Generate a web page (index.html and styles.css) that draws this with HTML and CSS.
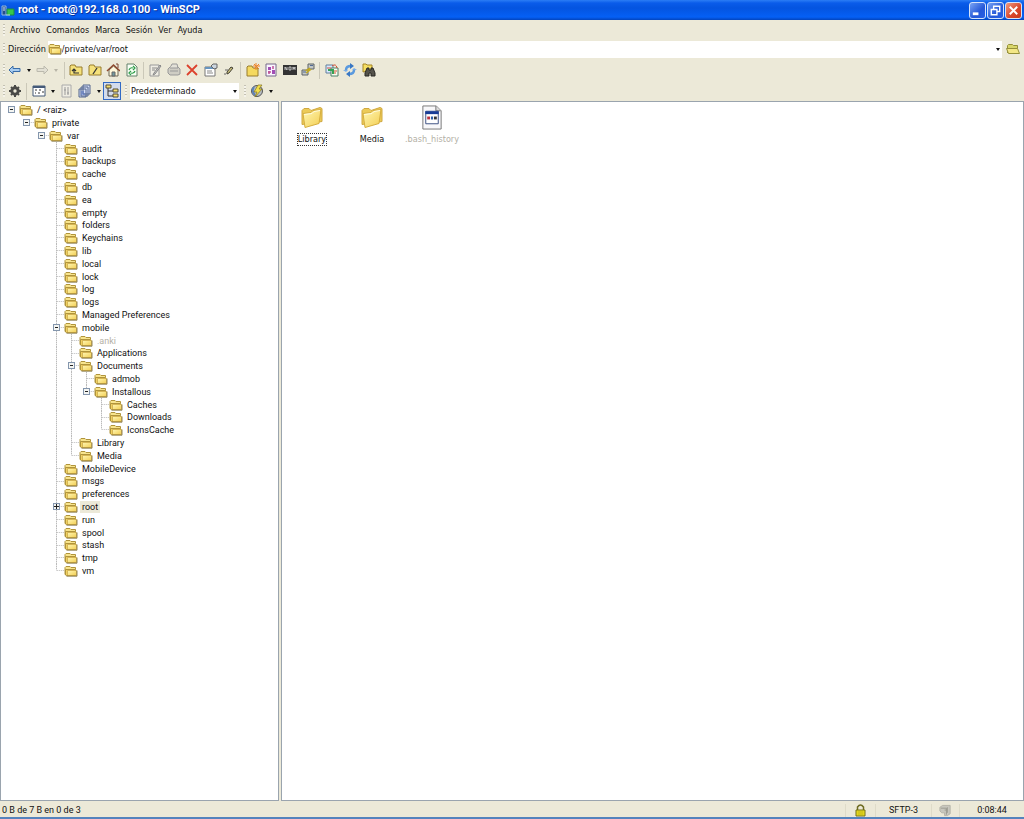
FILE: index.html
```html
<!DOCTYPE html>
<html lang="es">
<head>
<meta charset="utf-8">
<title>root - root@192.168.0.100 - WinSCP</title>
<link rel="stylesheet" href="styles.css">
</head>
<body>
<svg class="defs" aria-hidden="true">
  <defs>
    <linearGradient id="gold" x1="0" y1="0" x2="1" y2="1"><stop offset="0" stop-color="#fff7b4"/><stop offset="1" stop-color="#f3ce52"/></linearGradient>
    <symbol id="folder" viewBox="0 0 14 12"><path d="M1 9.500V2.500L2 1.500h4l1 1h4.500v2" fill="#f8e48c" stroke="#b0943c"/><path d="M1.500 10V4.500h10v6h-9z" fill="#f0d060" stroke="#b0943c"/><path d="M3.500 5.500h9v5h-9z" fill="url(#gold)" stroke="#c9a545" stroke-width=".7"/><path d="M2.500 11.200h10.500V5.500" fill="none" stroke="#77662f" stroke-width=".8"/></symbol>
    <symbol id="bigfolder" viewBox="0 0 24 24"><path d="M2 19V5l2-2h5l2 2 9-3 2 1v13z" fill="#eccb58" stroke="#d0a840"/><path d="M3 8l8-1 2-2 8-1-2 14-14 4z" fill="url(#gold)" stroke="#d6ae3e"/><path d="M4 9l8-1 2-2 6-1" fill="none" stroke="#fffce0"/></symbol>
    <symbol id="yfolder" viewBox="0 0 14 14"><path d="M1 12V3l1-1h4l1 2h6v8z" fill="#f5e17b" stroke="#987d2e"/></symbol>
  </defs>
</svg>
<div class="window">
  <header class="titlebar">
    <svg class="appicon" viewBox="0 0 14 14"><path d="M1 3h4v9H1z" fill="#244e8d" stroke="#92b7dd"/><path d="M2 5h2M2 7h2" stroke="#d6e8ff"/><path d="M6 6h7v6H6z" fill="#35c94b" stroke="#188c42"/><path d="M5 12h4" stroke="#c8e8ed"/></svg>
    <h1>root - root@192.168.0.100 - WinSCP</h1>
    <button class="cap" aria-label="Minimizar"><svg viewBox="0 0 16 16"><path d="M3 11.500h6" stroke="#fff" stroke-width="3"/></svg></button>
    <button class="cap" aria-label="Restaurar"><svg viewBox="0 0 16 16"><path d="M6 6V3.500h6.500V9H10M3.500 7h6v5.500h-6z" fill="none" stroke="#fff" stroke-width="1.500"/></svg></button>
    <button class="cap close" aria-label="Cerrar"><svg viewBox="0 0 16 16"><path d="M4 4l8 8M12 4l-8 8" stroke="#fff" stroke-width="2"/></svg></button>
  </header>
  <nav class="menu"><i class="grip"></i>
    <button>Archivo</button><button>Comandos</button><button>Marca</button><button>Sesión</button><button>Ver</button><button>Ayuda</button>
  </nav>
  <div class="address"><i class="grip"></i>
    <label for="dir">Dirección</label>
    <div class="field"><svg class="folder"><use href="#folder"/></svg><input id="dir" value="/private/var/root"><button class="drop" aria-label="Historial"></button></div>
    <button class="open" aria-label="Abrir carpeta"><svg class="folder" viewBox="0 0 14 12"><path d="M1.500 10V2.500l1-1h4l1 1h4v3" fill="#d8d66b" stroke="#96903a"/><path d="M2.500 10.500l-2-5h11l2 5z" fill="#f3e786" stroke="#96903a"/></svg></button>
  </div>
  <div class="bar" role="toolbar" aria-label="Navegación"><i class="grip"></i>
    <button class="tb" aria-label="Atrás"><svg viewBox="0 0 14 14"><path d="M1 7l4-4v2.500h7v3H5V11z" fill="#a8ccf0" stroke="#396ca8"/></svg></button><button class="drop" aria-label="Lista atrás"></button>
    <button class="tb" aria-label="Adelante" disabled><svg viewBox="0 0 14 14"><path d="M13 7L9 3v2.500H2v3h7V11z" fill="#e2e0d4" stroke="#bbb9ad"/></svg></button><button class="drop off" aria-label="Lista adelante" disabled></button><i class="sep"></i>
    <button class="tb" aria-label="Subir"><svg viewBox="0 0 14 14"><use href="#yfolder"/><path d="M10 10H5V6M3 8l2-2 2 2" fill="none" stroke="#333" stroke-width="1.200"/></svg></button>
    <button class="tb" aria-label="Raíz"><svg viewBox="0 0 14 14"><use href="#yfolder"/><path d="M5 11l4-6" stroke="#333" stroke-width="1.300"/></svg></button>
    <button class="tb" aria-label="Inicio"><svg viewBox="0 0 14 14"><path d="M3 7v6h9V7L7.500 3z" fill="#fff7d9" stroke="#6c6757"/><path d="M1 8l6.500-6L14 8" fill="none" stroke="#8e4b30" stroke-width="1.500"/><path d="M10 1h2v4" fill="none" stroke="#7b4431"/><path d="M6 9h3v4H6z" fill="#729ba0" stroke="#666"/></svg></button>
    <button class="tb" aria-label="Actualizar"><svg viewBox="0 0 14 14"><path d="M2 1h7l3 3v9H2z" fill="#f7fff4" stroke="#65806a"/><path d="M4 7q1-3 4-2M8 3l2 2-2 2M10 8q-1 3-4 2M6 8l-2 2 2 2" fill="none" stroke="#2c9c48" stroke-width="1.200"/></svg></button><i class="sep"></i>
    <button class="tb" aria-label="Editar" disabled><svg viewBox="0 0 14 14"><path d="M2 2h9v11H2z" fill="#efede4" stroke="#999"/><path d="M4 5h5M4 7h3M6 10l6-8 1 1-6 8-2 1z" fill="#ccc" stroke="#888"/></svg></button>
    <button class="tb" aria-label="Abrir" disabled><svg viewBox="0 0 14 14"><path d="M1 6l3-3h6l3 3v5l-2 1H3l-2-2z" fill="#cfcdc4" stroke="#999"/><path d="M4 3l1-2h5l1 4H3M3 8h8" fill="#e3e1d8" stroke="#999"/></svg></button>
    <button class="tb" aria-label="Borrar"><svg viewBox="0 0 14 14"><path d="M2 2l10 10M12 2L2 12" stroke="#dc422d" stroke-width="1.800"/></svg></button>
    <button class="tb" aria-label="Propiedades"><svg viewBox="0 0 14 14"><path d="M1 4h10v9H1z" fill="#fff" stroke="#777"/><path d="M1 5h10" stroke="#6795bf" stroke-width="2"/><path d="M3 8h5M3 10h6" stroke="#888"/><path d="M7 3l2-2h4v4l-3 1z" fill="#ccd6df" stroke="#666"/></svg></button>
    <button class="tb" aria-label="Renombrar"><svg viewBox="0 0 14 14"><path d="M5 9l4-5 2 1-4 5-2 1z" fill="#c9bf7b" stroke="#413f35"/><path d="M3 7h3M3 10v2" stroke="#666"/></svg></button><i class="sep"></i>
    <button class="tb" aria-label="Nueva carpeta"><svg viewBox="0 0 14 14"><path d="M1 13V4l1-1h4l1 2h5v8z" fill="#f5d95f" stroke="#987d2e"/><path d="M10 0v7M7 3h7M8 1l5 5M13 1L8 6" stroke="#ed8228"/></svg></button>
    <button class="tb" aria-label="Sincronizar navegación"><svg viewBox="0 0 14 14"><path d="M2 1h10v12H2z" fill="#faf4ff" stroke="#746988"/><path d="M4 4h3v3H4zM8 7h3v4H8z" fill="#a24db5"/><path d="M4 9h3M9 3v3M5 8v3" stroke="#bd4f95" stroke-width="1.500"/></svg></button>
    <button class="tb" aria-label="Consola"><svg viewBox="0 0 14 14"><path d="M0 2h14v10H0z" fill="#333"/><path d="M2 7V4l2 3V4M6 4h2v3H6zM10 7V4l1 2 1-2v3" fill="none" stroke="#e0e0e0" stroke-width=".8"/></svg></button>
    <button class="tb" aria-label="PuTTY"><svg viewBox="0 0 14 14"><path d="M7 1h6v5H7zM1 7h6v5H1z" fill="#c4c8c7" stroke="#5e6567"/><path d="M9 5L6 7h3l-4 3" fill="none" stroke="#c3aa1f" stroke-width="1.500"/><path d="M9 2.500h3M2 9h3" stroke="#526b95"/></svg></button><i class="sep"></i>
    <button class="tb" aria-label="Sincronizar"><svg viewBox="0 0 14 14"><path d="M1 2h7v8H1z" fill="#d7eaff" stroke="#627e9d"/><path d="M6 5h7v8H6z" fill="#f5fff3" stroke="#4e7f68"/><path d="M7 3q4-3 5 2M2 5h4M7 8h5M7 10h4" fill="none" stroke="#d35134"/><path d="M3 7h5v4" fill="none" stroke="#35a254" stroke-width="2"/></svg></button>
    <button class="tb" aria-label="Mantener actualizado"><svg viewBox="0 0 14 14"><path d="M3 7q0-4 5-4M11 7q0 4-5 4" fill="none" stroke="#5b9ade" stroke-width="2.500"/><path d="M7 0l4 3-4 3zM7 8l-4 3 4 3z" fill="#3a78c4"/><path d="M0 7h5L3 9zM9 7h5l-3-2z" fill="#79ade8"/></svg></button>
    <button class="tb" aria-label="Buscar"><svg viewBox="0 0 14 14"><path d="M1 9V1h3l1 1h5v5z" fill="#f5df64" stroke="#a68625"/><path d="M5 5h2v2h2V5h2l2 5v3H9v-3H7v3H3v-3z" fill="#55534b" stroke="#292925"/></svg></button>
  </div>
  <div class="bar" role="toolbar" aria-label="Opciones"><i class="grip"></i>
    <button class="tb" aria-label="Preferencias"><svg viewBox="0 0 14 14"><circle cx="7" cy="7" r="3.200" fill="none" stroke="#494946" stroke-width="3"/><path d="M7 1v2M7 11v2M1 7h2M11 7h2M3 3l1 1M10 10l1 1M11 3l-1 1M4 10l-1 1" stroke="#494946" stroke-width="2"/></svg></button><i class="sep"></i>
    <button class="tb" aria-label="Vista"><svg viewBox="0 0 14 14"><path d="M1 2h12v10H1z" fill="#fff" stroke="#445a79"/><path d="M1 3h12" stroke="#445a79" stroke-width="2"/><path d="M3 6h2M7 6h2M3 9h1M6 9h2M10 8h2" stroke="#333"/></svg></button><button class="drop" aria-label="Estilo de vista"></button>
    <button class="tb" aria-label="Columnas" disabled><svg viewBox="0 0 14 14"><path d="M2 1h9v12H2z" fill="#efede3" stroke="#aaa"/><path d="M5 3v8M8 3v8M4 6h2M7 9h2" stroke="#999"/></svg></button>
    <button class="tb" aria-label="Cola"><svg viewBox="0 0 14 14"><path d="M5 1h7v9H5zM3 3h7v9H3zM1 5h7v8H1z" fill="#d5def7" stroke="#52648b"/><path d="M3 8h3M3 10h4" stroke="#5472c1"/></svg></button><button class="drop" aria-label="Opciones de cola"></button>
    <button class="tb on" aria-label="Árbol" aria-pressed="true"><svg viewBox="0 0 14 14"><path d="M3 4v8h5M3 7h5" fill="none" stroke="#333"/><path d="M1 1h5v3H1zM8 5h5v3H8zM8 10h5v3H8z" fill="#f4df70" stroke="#544d35"/></svg></button>
    <i class="grip first"></i>
    <div class="preset"><select aria-label="Transferencia"><option>Predeterminado</option></select><i class="drop"></i></div>
    <i class="grip second"></i>
    <button class="tb" aria-label="Ajustes de transferencia"><svg viewBox="0 0 14 14"><circle cx="7" cy="7" r="5.500" fill="#b7bdc2" stroke="#555"/><path d="M4 3q-3 4 1 8" fill="none" stroke="#5c81b8" stroke-width="2"/><path d="M8 1L4 8h3l-2 5 7-8H9l3-4z" fill="#f3df49" stroke="#81731f" stroke-width=".7"/></svg></button><button class="drop" aria-label="Más ajustes"></button>
  </div>
  <main class="panels">
    <ul class="tree" role="tree" aria-label="Carpetas remotas">
      <li><i><button class="tg" aria-label="Contraer"></button></i><svg class="folder"><use href="#folder"/></svg><span>/ &lt;raiz&gt;</span></li>
      <li><i></i><i class="h"><button class="tg" aria-label="Contraer"></button></i><svg class="folder"><use href="#folder"/></svg><span>private</span></li>
      <li><i></i><i></i><i class="h"><button class="tg" aria-label="Contraer"></button></i><svg class="folder"><use href="#folder"/></svg><span>var</span></li>
      <li class="d3"><i class="v h"></i><svg class="folder"><use href="#folder"/></svg><span>audit</span></li>
      <li class="d3"><i class="v h"></i><svg class="folder"><use href="#folder"/></svg><span>backups</span></li>
      <li class="d3"><i class="v h"></i><svg class="folder"><use href="#folder"/></svg><span>cache</span></li>
      <li class="d3"><i class="v h"></i><svg class="folder"><use href="#folder"/></svg><span>db</span></li>
      <li class="d3"><i class="v h"></i><svg class="folder"><use href="#folder"/></svg><span>ea</span></li>
      <li class="d3"><i class="v h"></i><svg class="folder"><use href="#folder"/></svg><span>empty</span></li>
      <li class="d3"><i class="v h"></i><svg class="folder"><use href="#folder"/></svg><span>folders</span></li>
      <li class="d3"><i class="v h"></i><svg class="folder"><use href="#folder"/></svg><span>Keychains</span></li>
      <li class="d3"><i class="v h"></i><svg class="folder"><use href="#folder"/></svg><span>lib</span></li>
      <li class="d3"><i class="v h"></i><svg class="folder"><use href="#folder"/></svg><span>local</span></li>
      <li class="d3"><i class="v h"></i><svg class="folder"><use href="#folder"/></svg><span>lock</span></li>
      <li class="d3"><i class="v h"></i><svg class="folder"><use href="#folder"/></svg><span>log</span></li>
      <li class="d3"><i class="v h"></i><svg class="folder"><use href="#folder"/></svg><span>logs</span></li>
      <li class="d3"><i class="v h"></i><svg class="folder"><use href="#folder"/></svg><span>Managed Preferences</span></li>
      <li class="d3"><i class="v h"><button class="tg" aria-label="Contraer"></button></i><svg class="folder"><use href="#folder"/></svg><span>mobile</span></li>
      <li class="d3"><i class="v"></i><i class="v h"></i><svg class="folder"><use href="#folder"/></svg><span class="dim">.anki</span></li>
      <li class="d3"><i class="v"></i><i class="v h"></i><svg class="folder"><use href="#folder"/></svg><span>Applications</span></li>
      <li class="d3"><i class="v"></i><i class="v h"><button class="tg" aria-label="Contraer"></button></i><svg class="folder"><use href="#folder"/></svg><span>Documents</span></li>
      <li class="d3"><i class="v"></i><i class="v"></i><i class="v h"></i><svg class="folder"><use href="#folder"/></svg><span>admob</span></li>
      <li class="d3"><i class="v"></i><i class="v"></i><i class="v end h"><button class="tg" aria-label="Contraer"></button></i><svg class="folder"><use href="#folder"/></svg><span>Installous</span></li>
      <li class="d3"><i class="v"></i><i class="v"></i><i></i><i class="v h"></i><svg class="folder"><use href="#folder"/></svg><span>Caches</span></li>
      <li class="d3"><i class="v"></i><i class="v"></i><i></i><i class="v h"></i><svg class="folder"><use href="#folder"/></svg><span>Downloads</span></li>
      <li class="d3"><i class="v"></i><i class="v"></i><i></i><i class="v end h"></i><svg class="folder"><use href="#folder"/></svg><span>IconsCache</span></li>
      <li class="d3"><i class="v"></i><i class="v h"></i><svg class="folder"><use href="#folder"/></svg><span>Library</span></li>
      <li class="d3"><i class="v"></i><i class="v end h"></i><svg class="folder"><use href="#folder"/></svg><span>Media</span></li>
      <li class="d3"><i class="v h"></i><svg class="folder"><use href="#folder"/></svg><span>MobileDevice</span></li>
      <li class="d3"><i class="v h"></i><svg class="folder"><use href="#folder"/></svg><span>msgs</span></li>
      <li class="d3"><i class="v h"></i><svg class="folder"><use href="#folder"/></svg><span>preferences</span></li>
      <li class="d3"><i class="v h"><button class="tg plus" aria-label="Expandir"></button></i><svg class="folder"><use href="#folder"/></svg><span class="sel">root</span></li>
      <li class="d3"><i class="v h"></i><svg class="folder"><use href="#folder"/></svg><span>run</span></li>
      <li class="d3"><i class="v h"></i><svg class="folder"><use href="#folder"/></svg><span>spool</span></li>
      <li class="d3"><i class="v h"></i><svg class="folder"><use href="#folder"/></svg><span>stash</span></li>
      <li class="d3"><i class="v h"></i><svg class="folder"><use href="#folder"/></svg><span>tmp</span></li>
      <li class="d3"><i class="v end h"></i><svg class="folder"><use href="#folder"/></svg><span>vm</span></li>
    </ul>
    <ul class="files" aria-label="Archivos">
      <li><svg class="big"><use href="#bigfolder"/></svg><span class="focus">Library</span></li>
      <li><svg class="big"><use href="#bigfolder"/></svg><span>Media</span></li>
      <li><svg class="big" viewBox="0 0 24 26"><path d="M2.500 1h14l5 5v19h-19z" fill="#f8f8fa" stroke="#777"/><path d="M16 1v5h5" fill="#ddd" stroke="#777"/><path d="M5.500 6.500h13v13h-13z" fill="#fff" stroke="#3b4f82"/><path d="M5 8h14" stroke="#183c96" stroke-width="3"/><path d="M7 12h3v3H7z" fill="#bd3340"/><path d="M11 12h2v3h-2z" fill="#245aa5"/><path d="M14 12h3v3h-3z" fill="#333"/></svg><span class="dim">.bash_history</span></li>
    </ul>
  </main>
  <footer class="status">
    <span class="count">0 B de 7 B en 0 de 3</span>
    <span class="cell lock"><svg viewBox="0 0 12 13"><path d="M3 6V3q3-4 6 0v3" fill="none" stroke="#6d6b22" stroke-width="1.500"/><path d="M1.500 6h9v6h-9z" fill="#f1e51d" stroke="#736e16"/><path d="M3 8h6M3 10h6" stroke="#b8a918"/></svg></span>
    <span class="cell proto">SFTP-3</span>
    <span class="cell comp"><svg viewBox="0 0 14 13"><path d="M1 3l3-2h8v9l-3 2H6V9H3L1 7z" fill="#c8c7be" stroke="#b3b2a8"/><path d="M2 4h6v7M6 6h2M9 3v6" fill="none" stroke="#9a998f"/></svg></span>
    <span class="cell time">0:08:44</span>
  </footer>
</div>
</body>
</html>
```
FILE: styles.css
```css
* { box-sizing: border-box; }
body { margin: 0; font: 9px/13px Roboto, "Liberation Sans", sans-serif; color: #111; }
button, input, select { font: inherit; color: inherit; margin: 0; padding: 0; border: 0; background: none; }
ul { list-style: none; margin: 0; padding: 0; }
svg { display: block; flex: none; }
.defs { position: absolute; width: 0; height: 0; }
.window { display: flex; flex-direction: column; height: 100vh; background: #ece9d8; border-bottom: 2px solid #5583bd; }

.titlebar { display: flex; align-items: center; gap: 1px; height: 20px; padding: 0 2px 0 1px; background: linear-gradient(#2b7df5 0, #0a5cea 3px, #0454e0 8px, #0560f5 17px, #0344bd 20px); }
.appicon { width: 14px; height: 14px; }
.titlebar h1 { flex: 1; margin: 0; padding-left: 2px; font: bold 11px/16px Roboto, "Open Sans", sans-serif; color: #fff; text-shadow: 1px 1px #0a329c; }
.cap { width: 17px; height: 17px; border: 1px solid #d5e3fb; border-radius: 3px; background: linear-gradient(135deg, #7aa4f4, #2558d8 60%, #2a60e4); }
.cap svg { width: 15px; height: 15px; }
.cap.close { background: linear-gradient(135deg, #f09a80, #d9462a 60%, #c73a1c); }

.grip { flex: none; width: 2px; height: 12px; margin: 0 1px 0 2px; background: repeating-linear-gradient(#c4c1b2 0 1px, #f5f3ea 1px 3px); }
.menu, .address, .bar { display: flex; align-items: center; padding-left: 1px; }
.menu, .address, .preset { font-family: "DejaVu Sans Condensed", "DejaVu Sans", sans-serif; }
.menu { height: 20px; gap: 6px; }
.menu .grip { margin-right: -1px; }
.address { height: 18px; }
.address label { margin: 0 2px; }
.field { flex: 1; display: flex; align-items: center; height: 17px; background: #fff; }
.field input { flex: 1; min-width: 0; height: 15px; outline: 0; }
.folder { width: 14px; height: 12px; }
.open { padding: 0 4px; }

.bar { height: 21px; padding-top: 1px; }
.address + .bar { height: 22px; padding-top: 2px; }
.tb { display: grid; place-items: center; width: 18px; height: 18px; flex: none; }
.tb:nth-of-type(even) { width: 19px; }
.tb svg { width: 14px; height: 14px; }
.tb.on { border: 1px solid #316ac5; background: #d3dcec; }
.drop { display: grid; place-items: center; width: 9px; height: 16px; flex: none; }
.drop::after { content: ""; border: 2px solid transparent; border-top: 3px solid #111; border-bottom: 0; }
.drop.off { margin-right: 2px; }
.drop.off::after { border-top-color: #b8b5a7; }
.sep { width: 1px; height: 17px; margin: 0 2px; background: #cbc8b8; }
.preset { display: flex; align-items: center; width: 109px; height: 16px; background: #fff; }
.preset select { flex: 1; appearance: none; padding-left: 1px; }
.first { margin: 0 3px 0 4px; }
.second { margin-left: 5px; }

.panels { flex: 1; min-height: 0; display: grid; grid-template-columns: 279px 1fr; gap: 2px; }
.tree, .files { border: 1px solid #9aa4ae; background: #fff; overflow: hidden; }
.tree { display: grid; grid-template-rows: repeat(8, 13px 13px 13px 13px 12px); align-content: start; padding: 1px 0 0 3px; }
.tree li { display: flex; align-items: center; }
.tree li > i { display: grid; place-items: center; align-self: stretch; width: 15px; flex: none; }
.tree .d3 { padding-left: 45px; }
.tree .folder { margin-right: 2px; }
.tree span { padding: 0 2px; line-height: 12px; }
.v { background: repeating-linear-gradient(#bbb 0 1px, #e4e4e4 1px 2px) 7px 0 / 1px 100% no-repeat; }
.v.end { background-size: 1px 50%; }
.h { position: relative; }
.h::before { content: ""; position: absolute; left: 8px; right: 0; top: 6px; height: 1px; background: repeating-linear-gradient(90deg, #ccc 0 1px, #eee 1px 2px); }
.tg { position: relative; width: 7px; height: 7px; border: 1px solid #8496ad; background: linear-gradient(#222, #222) center / 3px 1px no-repeat #f4f5f2; }
.tg.plus { background: linear-gradient(#222, #222) center / 5px 1px no-repeat, linear-gradient(#222, #222) center / 1px 5px no-repeat #f4f5f2; }
.dim { color: #b4b1a6; }
.tree .sel { background: #ece9d8; }

.files { display: flex; align-items: flex-start; padding: 3px 0 0; }
.files li { display: flex; flex-direction: column; align-items: center; gap: 3px; width: 60px; font-family: "DejaVu Sans Condensed", "DejaVu Sans", sans-serif; }
.big { width: 24px; height: 25px; }
.files span { border: 1px dotted transparent; line-height: 11px; white-space: nowrap; }
.files .focus { border-color: #333; }

.status { display: flex; align-items: center; height: 16px; padding: 3px 0 0 2px; }
.count { flex: 1; }
.cell { display: flex; align-items: center; justify-content: center; height: 13px; border-left: 1px solid #dedbc9; }
.cell svg { width: 13px; height: 13px; }
.lock { width: 30px; }
.proto { width: 56px; }
.comp { width: 28px; }
.time { width: 65px; }
```
